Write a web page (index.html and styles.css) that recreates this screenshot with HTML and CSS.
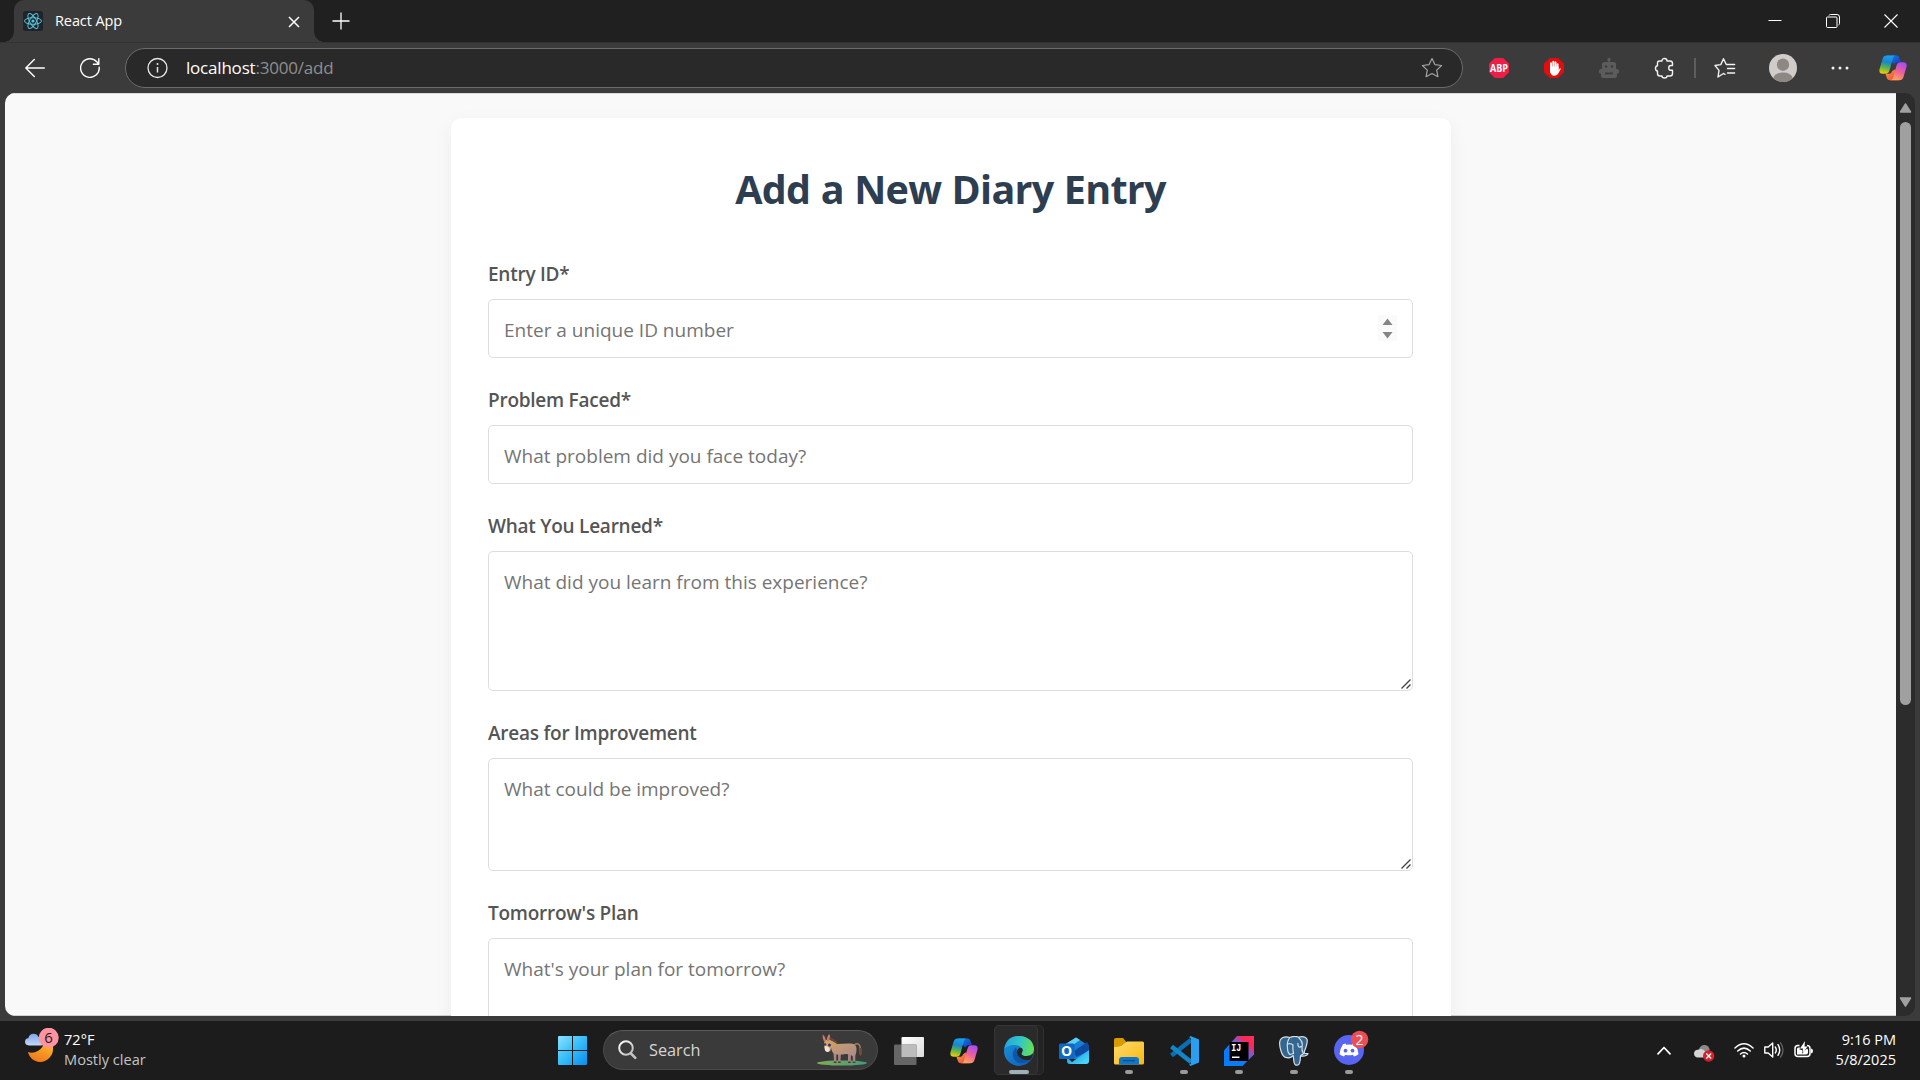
FILE: index.html
```
<!DOCTYPE html>
<html lang="en">
<head>
<meta charset="utf-8">
<title>React App</title>
<link rel="stylesheet" href="styles.css">
</head>
<body>
<svg class="defs" width="0" height="0" aria-hidden="true">
  <defs>
    <linearGradient id="cpLeft" x1="0.4" y1="0" x2="0.2" y2="1"><stop offset="0" stop-color="#1a9df0"/><stop offset="0.35" stop-color="#1b86c9"/><stop offset="0.65" stop-color="#5fb54a"/><stop offset="1" stop-color="#fccb00"/></linearGradient>
    <linearGradient id="cpTop" x1="0" y1="0" x2="1" y2="1"><stop offset="0" stop-color="#0b87e4"/><stop offset="1" stop-color="#1a35c0"/></linearGradient>
    <linearGradient id="cpRight" x1="0.7" y1="0" x2="0.3" y2="1"><stop offset="0" stop-color="#a64df5"/><stop offset="0.5" stop-color="#ee5f9b"/><stop offset="1" stop-color="#ffa956"/></linearGradient>
    <linearGradient id="cpBottom" x1="0" y1="0" x2="1" y2="1"><stop offset="0" stop-color="#f9a13a"/><stop offset="1" stop-color="#ed3a45"/></linearGradient>
    <symbol id="copilot" viewBox="0 0 28 28">
      <path fill="url(#cpTop)" d="M8 1.500h9.500c1.800 0 2.500 1 3 2.500L22 8.200h-3.200c-2 0-3 .8-3.600 2.600L13 8z"/>
      <path fill="url(#cpBottom)" d="M20 26.300h-9.200c-1.800 0-2.600-1.200-3.100-2.800L6.500 19.800h3c2 0 3-.8 3.500-2.600l3-2z"/>
      <path fill="url(#cpLeft)" d="M7.800 1.500H17c-1.700 0-2.700 1.200-3.200 3L10.600 16c-.8 2.800-1.900 3.800-4.300 3.800H4C.8 19.800-.2 17.900.6 15L3.500 5C4.300 2.600 5.400 1.500 7.800 1.500z"/>
      <path fill="url(#cpRight)" d="M20.200 26.300H11c1.700 0 2.700-1.200 3.200-3L17.400 12c.8-2.800 1.900-3.800 4.300-3.800H24c3.200 0 4.200 1.900 3.400 4.800l-2.900 10c-.8 2.300-1.900 3.300-4.300 3.300z"/>
    </symbol>
    <linearGradient id="win" x1="0" y1="0" x2="1" y2="1"><stop offset="0" stop-color="#8be3ff"/><stop offset="0.5" stop-color="#35bdf8"/><stop offset="1" stop-color="#0a8cf0"/></linearGradient>
    <linearGradient id="moon" x1="1" y1="0" x2="0.5" y2="1"><stop offset="0" stop-color="#ffc02e"/><stop offset="1" stop-color="#f07a1c"/></linearGradient>
    <linearGradient id="cloud" x1="0" y1="0" x2="0" y2="1"><stop offset="0" stop-color="#7ea6e8"/><stop offset="1" stop-color="#c4d8fa"/></linearGradient>
    <linearGradient id="edgeTop" x1="0" y1="0.3" x2="1" y2="0.5"><stop offset="0" stop-color="#23a5e0"/><stop offset="0.5" stop-color="#31c6c6"/><stop offset="1" stop-color="#65e052"/></linearGradient>
    <linearGradient id="edgeLow" x1="0" y1="0" x2="1" y2="1"><stop offset="0" stop-color="#1b96e3"/><stop offset="1" stop-color="#0f58ab"/></linearGradient>
    <linearGradient id="folder" x1="0" y1="0" x2="1" y2="1"><stop offset="0" stop-color="#ffdb70"/><stop offset="1" stop-color="#f9b90e"/></linearGradient>
    <linearGradient id="mailBody" x1="0" y1="0" x2="1" y2="1"><stop offset="0" stop-color="#1689d8"/><stop offset="1" stop-color="#4fe3ff"/></linearGradient>
    <linearGradient id="idea" x1="0.1" y1="1" x2="1" y2="0"><stop offset="0.3" stop-color="#087cfa"/><stop offset="0.62" stop-color="#8a55c8"/><stop offset="0.78" stop-color="#fe2857"/><stop offset="1" stop-color="#fe315d"/></linearGradient>
    <linearGradient id="viewFront" x1="0" y1="0" x2="1" y2="1"><stop offset="0" stop-color="#ffffff"/><stop offset="1" stop-color="#dcdcdc"/></linearGradient>
    <linearGradient id="lens" x1="0" y1="0" x2="1" y2="1"><stop offset="0" stop-color="#ffffff"/><stop offset="1" stop-color="#b8b8b8"/></linearGradient>
    <linearGradient id="grass" x1="0" y1="0" x2="1" y2="0"><stop offset="0" stop-color="#7fae55"/><stop offset="1" stop-color="#459a7a"/></linearGradient>
    <linearGradient id="hide" x1="0" y1="0" x2="1" y2="1"><stop offset="0" stop-color="#d5a660"/><stop offset="1" stop-color="#a98a8c"/></linearGradient>
  </defs>
</svg>

<header class="titlebar">
  <div class="tab">
    <svg class="favicon" width="20" height="20" viewBox="0 0 20 20" fill="none" stroke="#58c4dc"><rect width="20" height="20" rx="2.500" fill="#20232a" stroke="none"/><ellipse cx="10" cy="10" rx="8.500" ry="3.300"/><ellipse cx="10" cy="10" rx="8.500" ry="3.300" transform="rotate(60 10 10)"/><ellipse cx="10" cy="10" rx="8.500" ry="3.300" transform="rotate(120 10 10)"/><circle cx="10" cy="10" r="1.600" fill="#58c4dc" stroke="none"/></svg>
    <span class="tab-title">React App</span>
    <svg class="tab-close" width="12" height="12" viewBox="0 0 12 12" stroke="#fff" stroke-width="1.500"><path d="M1 1l10 10M11 1L1 11"/></svg>
  </div>
  <svg class="new-tab" width="18" height="18" viewBox="0 0 18 18" stroke="#fff" stroke-width="1.300"><path d="M9 .5v17M.5 9h17"/></svg>
  <div class="caption">
    <svg width="14" height="14" viewBox="0 0 14 14" stroke="#fff"><path d="M.5 6.500h13"/></svg>
    <svg width="14" height="14" viewBox="0 0 14 14" fill="none" stroke="#fff"><rect x=".5" y="3" width="10.500" height="10.500" rx="1"/><path d="M3 1.500Q3.300.5 4.500.5H11q2.500 0 2.500 2.500v6.500q0 1.200-1 1.500"/></svg>
    <svg width="14" height="14" viewBox="0 0 14 14" stroke="#fff" stroke-width="1.100"><path d="M.5.500l13 13M13.500.5l-13 13"/></svg>
  </div>
</header>

<nav class="toolbar">
  <svg class="back" width="20" height="20" viewBox="0 0 20 20" fill="none" stroke="#fff" stroke-width="1.400" stroke-linecap="round" stroke-linejoin="round"><path d="M19.300 10H1M9.300 1.500L.8 10l8.500 8.500"/></svg>
  <svg class="reload" width="20" height="20" viewBox="0 0 20 20" fill="none" stroke="#fff" stroke-width="1.400" stroke-linecap="round" stroke-linejoin="round"><path d="M19.200 9.200A9.300 9.300 0 1 1 17 4l1.700 2M18.800.8v5.400h-5.400"/></svg>
  <div class="omnibox">
    <svg width="22" height="22" viewBox="0 0 22 22" fill="none" stroke="#e8e8e8" stroke-width="1.300"><circle cx="11.500" cy="11" r="9.500"/><path d="M11.500 10v5.500" stroke-width="1.500"/><circle cx="11.500" cy="7" r="1" fill="#e8e8e8" stroke="none"/></svg>
    <span class="url"><span class="host">localhost</span>:3000/add</span>
    <svg class="star" width="22" height="22" viewBox="0 0 22 22" fill="none" stroke="#a3a3a3" stroke-width="1.200" stroke-linejoin="round"><path d="M11 1.500l2.900 6.100 6.700.9-4.900 4.600 1.200 6.600L11 16.500l-5.900 3.200 1.200-6.600L1.400 8.500l6.700-.9z"/></svg>
  </div>
  <div class="extensions">
    <svg width="22" height="22" viewBox="0 0 22 22"><path fill="#ed1e45" d="M6.800 1h8.400L21 6.800v8.400L15.200 21H6.800L1 15.200V6.800z"/><text class="abp" x="11" y="14.700" text-anchor="middle" textLength="18" lengthAdjust="spacingAndGlyphs">ABP</text></svg>
    <svg width="22" height="22" viewBox="0 0 22 22"><path fill="#e40d0d" d="M6.800 1h8.400L21 6.800v8.400L15.200 21H6.800L1 15.200V6.800z"/><path fill="none" stroke="#fff" stroke-width="1.900" stroke-linecap="round" d="M8 12V6.300M10.300 10V4.700M12.500 10V5.200M14.600 12V7.200"/><path fill="#fff" d="M7 9.500h8.500V13l1.200-1.400q1-.6 1 .3L15 17q-1.200 1.700-4 1.700T7 15z"/></svg>
    <svg width="22" height="22" viewBox="0 0 22 22" fill="#5c5c5c"><circle cx="11" cy="2.500" r="1.700"/><path d="M10.300 3h1.400v3h-1.400zM6.500 5h9Q18 5 18 7.500V12H4V7.500Q4 5 6.500 5zM3 12h16q2 0 2 2v1q0 1.500-1.500 1.500H19V19q0 2-2 2H5q-2 0-2-2v-2.500h-.5Q1 16.500 1 15v-1q0-2 2-2z"/><g fill="#3b3b3b"><circle cx="8" cy="9.500" r="1.200"/><circle cx="14" cy="9.500" r="1.200"/><path d="M7 15.500h8v1.800H7z"/></g></svg>
    <svg class="puzzle" width="22" height="22" viewBox="0 0 22 22" fill="none" stroke="#f2f2f2" stroke-width="1.400" stroke-linejoin="round"><path d="M5.500 4H8q0-2.500 2.500-2.500T13 4h3q2.500 0 2.500 2.500v2H17q-2.300 0-2.300 2.400T17 13.300h1.500v3.200Q18.500 19 16 19h-3q0 2-2.500 2T8 19H6q-2.500 0-2.500-2.500V14q-2-.3-2-2.600t2-2.600V6q0-2 2-2z"/></svg>
    <i class="divider"></i>
    <svg class="favs" width="22" height="22" viewBox="0 0 22 22" fill="none" stroke="#f2f2f2" stroke-width="1.400" stroke-linecap="round" stroke-linejoin="round"><path d="M9.500 16.500L4 20l1-6.600L1 8.500l5.800-.9L9.500 1.700l2.800 5.800h8.300M9.500 16.500l1.500.8M13.500 11.500h7.100M13.500 16h7.100"/></svg>
    <svg class="avatar" width="28" height="28" viewBox="0 0 28 28"><circle cx="14" cy="14" r="14" fill="#cfccca"/><circle cx="14" cy="10.700" r="6.200" fill="#8e8885"/><path fill="#8e8885" d="M4.300 24Q6 18.500 14 18.500T23.700 24Q20 28 14 28T4.300 24z"/></svg>
    <svg class="dots" width="18" height="18" viewBox="0 0 18 18" fill="#f2f2f2"><circle cx="2" cy="9" r="1.500"/><circle cx="9" cy="9" r="1.500"/><circle cx="16" cy="9" r="1.500"/></svg>
    <svg class="cp" width="28" height="28"><use href="#copilot"/></svg>
  </div>
</nav>

<main class="frame">
  <div class="viewport">
    <form class="card">
      <h1 class="heading">Add a New Diary Entry</h1>
      <div class="group">
        <label class="label" for="eid">Entry ID*</label>
        <div class="field number">
          <input class="control" id="eid" type="text" inputmode="numeric" placeholder="Enter a unique ID number">
          <svg class="spinner" width="19" height="26" viewBox="0 0 19 26"><rect width="19" height="26" fill="#fafafa"/><path fill="#858585" d="M9.500 3.500l5 6.500h-10zM4.500 17h10l-5 6.500z"/></svg>
        </div>
      </div>
      <div class="group">
        <label class="label" for="problem">Problem Faced*</label>
        <div class="field"><input class="control" id="problem" type="text" placeholder="What problem did you face today?"></div>
      </div>
      <div class="group">
        <label class="label" for="learned">What You Learned*</label>
        <div class="field tall"><textarea class="control" id="learned" placeholder="What did you learn from this experience?"></textarea>
          <svg class="grip" width="10" height="10" viewBox="0 0 10 10" stroke="#444" stroke-width="1.400"><path d="M.5 9.500l9-9M5.500 9.500l4-4"/></svg></div>
      </div>
      <div class="group">
        <label class="label" for="areas">Areas for Improvement</label>
        <div class="field mid"><textarea class="control" id="areas" placeholder="What could be improved?"></textarea>
          <svg class="grip" width="10" height="10" viewBox="0 0 10 10" stroke="#444" stroke-width="1.400"><path d="M.5 9.500l9-9M5.500 9.500l4-4"/></svg></div>
      </div>
      <div class="group">
        <label class="label" for="plan">Tomorrow's Plan</label>
        <div class="field mid"><textarea class="control" id="plan" placeholder="What's your plan for tomorrow?"></textarea></div>
      </div>
    </form>
  </div>
  <div class="scrollbar">
    <svg width="13" height="10" viewBox="0 0 13 10"><path fill="#a0a0a0" stroke="#a0a0a0" stroke-width="1.500" stroke-linejoin="round" d="M6.500 1l5 8h-10z"/></svg>
    <div class="thumb"></div>
    <svg class="down" width="13" height="10" viewBox="0 0 13 10"><path fill="#a0a0a0" stroke="#a0a0a0" stroke-width="1.500" stroke-linejoin="round" d="M1.500 1h10l-5 8z"/></svg>
  </div>
</main>

<footer class="taskbar">
  <div class="weather">
    <svg width="36" height="36" viewBox="0 0 36 36"><path fill="url(#moon)" d="M27.500 15.500q2 9-2.800 14-5 5.500-12 4.200Q5.500 32.300 2.800 24q5.200 2 10.500-1.200 5.400-3.500 5.700-9z"/><path fill="url(#cloud)" d="M4 17.500q-4-.3-4-3.700 0-3.200 3.300-3.600Q4.300 5.700 8.500 5.700q3.700 0 4.900 3.300 6.300 0 6.300 4.300 0 4.200-4.500 4.200z"/><circle cx="23.700" cy="9.700" r="10" fill="#ff93a0"/><text class="badge-dark" x="23.600" y="15" text-anchor="middle">6</text></svg>
    <div class="weather-text"><span class="temp">72°F</span><span class="sky">Mostly clear</span></div>
  </div>
  <div class="slot"><svg width="29" height="29" viewBox="0 0 29 29"><path fill="url(#win)" d="M1 0h13v14H0V1q0-1 1-1zM15 0h13q1 0 1 1v13H15zM0 15h14v14H1q-1 0-1-1zM15 15h14v13q0 1-1 1H15z"/></svg></div>
  <div class="search">
    <svg width="19" height="20" viewBox="0 0 19 20" fill="none" stroke="url(#lens)" stroke-width="2"><circle cx="8" cy="8" r="6.800"/><path stroke="#c4c4c4" stroke-width="2.500" stroke-linecap="round" d="M13 13.500l4.300 4.300"/></svg>
    <span class="search-text">Search</span>
    <svg class="donkey" width="50" height="32" viewBox="0 0 50 32"><ellipse cx="25" cy="29" rx="25" ry="2.600" fill="url(#grass)"/><path fill="none" stroke="#a87f5c" stroke-width="1.500" d="M37 11q6-4 6.500 5"/><path fill="#7a4e35" d="M42.300 14h2.200l.4 6-1.500 2-1.500-3z"/><path fill="#a88484" d="M16.500 19h3l-.3 9H17zM21 19h3l-.6 9h-2.200zM31 19h3l-.3 9H31zM35.500 18h3l-.3 10H36z"/><path fill="url(#hide)" d="M7.300 7.500Q9 5 12 5.500q5 1 8 4.500 8-.7 14-.5 5.500.4 5.500 5.500 0 6-3 7.500-4-3-8-2.500-5 1-11 0-2.700-1.500-3.300-6l-1 3q-3 1.500-5.400-1Q6.500 12 7.300 7.500z"/><path fill="#c67b69" d="M5.700.5Q9 3 8.700 7L6.900 7Q5 4 5.700.5zM12.300 0q2 3.500-.3 7h-2Q9.400 3 12.300 0z"/><path fill="#694632" d="M12.500 3.500Q19 5 22 10q-4-1-9.500-4.500z"/><path fill="#eee3df" d="M8 12q3-.5 4.700 2.500.3 3.500-2.400 3.600Q7 17.500 8 12z"/><circle cx="8" cy="10.500" r="1.200" fill="#31366e"/><circle cx="12.500" cy="11" r="1.500" fill="#31366e"/><path fill="#503b3a" d="M16.800 27.500h2.700V29h-2.700zM21 27.500h2.700V29H21zM31 27.500h2.700V29H31zM35.700 27.500h2.700V29h-2.700z"/></svg>
  </div>
  <div class="slot"><svg width="30" height="28" viewBox="0 0 30 28"><rect x="7.500" width="22.500" height="20" rx="1" fill="url(#viewFront)"/><rect y="7.500" width="22.500" height="20.500" rx="1" fill="#666"/><rect x="7.500" y="7.500" width="15" height="12.500" fill="#bdbdbd"/></svg></div>
  <div class="slot"><svg width="28" height="28"><use href="#copilot"/></svg></div>
  <div class="slot active"><div class="tile tile-back"></div><div class="tile"></div>
    <svg class="over" width="30" height="30" viewBox="0 0 30 30"><circle cx="15" cy="15" r="15" fill="url(#edgeLow)"/><path fill="url(#edgeTop)" d="M.4 12.500Q2.500 0 15 0q13.700.8 15 12.500.3 7-7.200 7.500-5.300 0-5.300-2.600 2-1.900.3-4.900-2-3.200-6.800-3.500Q4.500 8.700.4 12.500z"/><path fill="#0c4c9c" opacity=".75" d="M11.500 11.500q-4.500 5.500-1.700 11Q12.500 27.500 19 27q4.500-.5 7.500-3.500-5.500 1.500-9.500-1-4.500-3-3.500-8z"/><path fill="#252525" d="M17.500 17.400q0 2.600 5.300 2.600 3.400 0 6-2l.2.800q-.7 2.600-2.300 4.600-5 1.700-9.700-.9-4.700-3.200-3.800-7.700.9-3 3.600-3 2.800.8 1.500 4z"/></svg>
    <i class="mark wide"></i></div>
  <div class="slot"><svg width="30" height="28" viewBox="0 0 30 28"><path fill="#1681d3" d="M5 8L17 .5 30 9v13H5z"/><path fill="#5fd0f5" d="M5 8L17 .5l4 2.500L8 12z"/><path fill="#0f4aa0" d="M15 14L28 5l2 3.500V14l-13 6z"/><path fill="url(#mailBody)" d="M13 25l17-12v11q0 3-3 3H11q-3 0-3-3v-4z"/><rect y="6.500" width="15.500" height="15.500" rx="1.500" fill="#0c69c5"/><text class="outlook" x="7.700" y="19" text-anchor="middle">O</text></svg></div>
  <div class="slot"><svg width="30" height="28" viewBox="0 0 30 28"><path fill="#d99b00" d="M0 3q0-2 2-2h7l3 3.500v6H0z"/><path fill="url(#folder)" d="M0 10q5 0 7.500-1.200L13 4.500h15.500Q30 4.500 30 6v20q0 1.500-1.500 1.500h-27Q0 27.500 0 26z"/><path fill="#1176c8" d="M5 27.500V23q0-3 3-3h14q3 0 3 3v4.500z"/><path fill="#0b4f90" d="M9 23h12v1.300H9z"/></svg><i class="mark"></i></div>
  <div class="slot"><svg width="30" height="30" viewBox="0 0 30 30"><path fill="none" stroke="#0b6fb5" stroke-width="4.600" stroke-linejoin="round" d="M22 4L2.500 19.500"/><path fill="none" stroke="#1585c9" stroke-width="4.600" stroke-linejoin="round" d="M2.500 10.500L22 26"/><path fill="#2a9ff0" d="M21.500 0L30 3.500v23L21.500 30 20 28.500q2 0 2-2v-23q0-2-2-2z"/></svg><i class="mark"></i></div>
  <div class="slot"><svg width="30" height="30" viewBox="0 0 30 30"><path fill="url(#idea)" d="M13 0h17v18.500L18.500 30H0V14.500z"/><rect x="5.500" y="6" width="19" height="19"/><text class="ij" x="7.200" y="15" textLength="10" lengthAdjust="spacingAndGlyphs">IJ</text><path fill="#fff" d="M8 20.500h7.500V22H8z"/></svg><i class="mark"></i></div>
  <div class="slot"><svg width="30" height="30" viewBox="0 0 30 30" fill="#336791" stroke="#d9e0e5" stroke-width="1.200" stroke-linejoin="round"><path d="M8 21.500Q4 22 2 15-.5 7 1.500 3.500 4.500-.5 11 1.500q5-2 8.500-.3Q26-.5 28 3.300 29 6.500 25.500 15q-.5 2.500.5 2.500l3 .2q-1.500 3-7.500 2.300-.3 8.500-2.500 9-3.500.8-4-3l-.8-6.500Q10.500 23 8 21.500z"/><path fill="none" d="M10.500 2Q7.500 6 8.500 12q0 5 2.500 6.500l3.500-1Q13.500 12 14 9q-2-2-5.500-1M19.500 1.500q5 4.500 3.500 9.500-.5 4 1.500 6.500l-3 2.500M19 7q-.5 2 .5 3.500t3-.5"/></svg><i class="mark"></i></div>
  <div class="slot"><svg class="discord" width="35" height="36" viewBox="0 0 35 36"><circle cx="15" cy="20" r="15" fill="#5865f2"/><path fill="#fff" d="M9 14.200l2.500-.7.7 1.200q2.800-.5 5.600 0l.7-1.200 2.500.7q3.300 4.800 3.500 10-1.700 1.500-4.500 2.300l-1.200-1.800q-3.800 1-7.600 0L10 26.500q-2.800-.8-4.500-2.300.2-5.200 3.500-10z"/><circle cx="11.500" cy="20.700" r="1.900" fill="#5865f2"/><circle cx="18.500" cy="20.700" r="1.900" fill="#5865f2"/><circle cx="25.600" cy="9.500" r="8.700" fill="#ec4e56"/><text class="badge-light" x="25.600" y="14.700" text-anchor="middle">2</text></svg><i class="mark"></i></div>
  <div class="tray">
    <svg class="chev" width="14" height="9" viewBox="0 0 14 9" fill="none" stroke="#fff" stroke-width="1.700" stroke-linecap="round" stroke-linejoin="round"><path d="M1 7.800l6-6.300 6 6.300"/></svg>
    <svg class="drive" width="21" height="20" viewBox="0 0 21 20"><path fill="#8a8a8a" d="M5 7Q7 2.500 11 3q4 .5 4.700 5l-5 5z"/><path fill="#d4d4d4" d="M4 15.500q-4-.3-4-4Q.2 8 4 7.700q3-1.500 5.500.3L14 12v3.500z"/><circle cx="14.700" cy="14" r="5.700" fill="#d8202a"/><path stroke="#fff" stroke-width="1.400" d="M12.300 11.600l4.800 4.800M17.100 11.600l-4.800 4.800"/></svg>
    <svg class="wifi" width="20" height="16" viewBox="0 0 20 16" fill="none" stroke="#fff" stroke-width="1.500" stroke-linecap="round"><path d="M1 6q9-8.500 18 0M3.700 9q6.300-5.800 12.600 0M6.500 12q3.500-3 7 0"/><circle cx="10" cy="14" r="1.500" fill="#fff" stroke="none"/></svg>
    <svg class="sound" width="20" height="18" viewBox="0 0 20 18" fill="none" stroke="#fff" stroke-width="1.400" stroke-linecap="round" stroke-linejoin="round"><path d="M.8 6v6h3.400l4.500 4V2L4.200 6zM11.300 6q2 3 0 6M14 3.700q3.500 5.300 0 10.600"/><path stroke="#5d5d5d" d="M16.500 1.800q5 7.200 0 14.400"/></svg>
    <svg class="battery" width="20" height="18" viewBox="0 0 20 18"><path fill="none" stroke="#fff" stroke-width="1.500" d="M5.500 4.500H4Q1 4.500 1 7.500v5q0 3 3 3h9q3 0 3-3v-5q0-3-3-3"/><path fill="#fff" d="M17 7.500q2 .3 2 2.500t-2 2.500zM3 13.500V8q0-1.500 1.500-1.500H6l-.5 2L8 9v4.500zM8 13.500V12l5-4.500q1 .3 1 2v2q0 2-2 2zM11 0L6 7.500h3L8 13l5.500-7.500h-3z"/></svg>
    <div class="clock"><span>9:16 PM</span><span>5/8/2025</span></div>
  </div>
</footer>
</body>
</html>
```
FILE: styles.css
```
* { box-sizing: border-box; }
body {
  margin: 0;
  width: 1920px;
  height: 1080px;
  overflow: hidden;
  display: flex;
  flex-direction: column;
  background: #3b3b3b;
  font-family: "Open Sans", "Noto Sans", sans-serif;
}
svg { display: block; flex: none; }
.defs { position: absolute; }

/* Title bar */
.titlebar {
  height: 42px;
  flex: none;
  display: flex;
  align-items: center;
  background: #202020;
  padding-left: 14px;
}
.tab {
  position: relative;
  width: 300px;
  height: 42px;
  display: flex;
  align-items: center;
  padding: 0 14px 0 9px;
  background: #3b3b3b;
  border-radius: 10px 10px 0 0;
}
.tab::before, .tab::after {
  content: "";
  position: absolute;
  bottom: 0;
  width: 10px;
  height: 10px;
}
.tab::before { left: -10px; background: radial-gradient(circle at 0 0, #202020 9.500px, #3b3b3b 10px); }
.tab::after { right: -10px; background: radial-gradient(circle at 100% 0, #202020 9.500px, #3b3b3b 10px); }
.tab-title { margin-left: 12px; flex: 1; font-size: 14.500px; letter-spacing: -0.1px; line-height: 20px; color: #fff; }
.tab-close { margin-top: 2px; }
.new-tab { margin-left: 18px; }
.caption { margin-left: auto; display: flex; }
.caption svg { margin: 0 22px; }

/* Toolbar */
.toolbar {
  height: 51px;
  flex: none;
  display: flex;
  align-items: center;
  border-top: 1px solid #333;
  padding-left: 25px;
}
.reload { margin-left: 35px; }
.omnibox {
  width: 1338px;
  height: 40px;
  margin-left: 25px;
  display: flex;
  align-items: center;
  padding: 0 19px 0 20px;
  border: 1px solid #6b6b6b;
  border-radius: 20px;
  background: #292929;
}
.url { flex: 1; margin-left: 18px; font-size: 17px; line-height: 24px; letter-spacing: -0.2px; color: #8f8f8f; margin-top: -1px; }
.host { color: #fff; }
.extensions { flex: 1; display: flex; align-items: center; padding-left: 25px; }
.extensions svg + svg { margin-left: 33px; }
.abp { font: 700 10px "Open Sans", sans-serif; fill: #fff; }
.extensions svg.puzzle { margin-left: 34px; }
.divider { width: 2px; height: 20px; margin: 0 18px 0 18px; background: #5d5d5d; }
.extensions svg.avatar { margin-left: 33px; }
.extensions svg.dots { margin-left: 34px; }
.extensions svg.cp { margin-left: 30px; }

/* Web page */
.frame { height: 923px; flex: none; display: flex; margin: 0 5px; border-radius: 10px; overflow: hidden; }
.viewport {
  width: 1891px;
  overflow: hidden;
  padding: 25px 445px 0 446px;
  background: #f9f9f9;
  box-shadow: inset 0 1px 0 #dcdcdc, inset 0 -1px 0 #cfcfcf;
}
.card {
  display: flex;
  flex-direction: column;
  gap: 27px;
  height: 1200px;
  padding: 41px 38px 0 37px;
  border-radius: 10px;
  background: #fff;
  box-shadow: 0 5px 19px rgba(0, 0, 0, 0.05);
}
.heading {
  margin: 0 0 13px;
  height: 60px;
  line-height: 60px;
  text-align: center;
  font-size: 39.500px;
  font-weight: 700;
  letter-spacing: -0.75px;
  word-spacing: 0.9px;
  color: #2c3e50;
}
.group { display: flex; flex-direction: column; gap: 10px; }
.label { line-height: 30px; font-size: 19px; font-weight: 600; letter-spacing: -0.25px; color: #555; }
.field {
  position: relative;
  display: flex;
  height: 59px;
  border: 1px solid #ddd;
  border-radius: 5px;
  background: #fff;
}
.field.tall { height: 140px; }
.field.mid { height: 113px; }
.control {
  flex: 1;
  border: 0;
  outline: 0;
  margin: 0;
  padding: 17px 15px 13px;
  background: transparent;
  resize: none;
  font: 19px/27px "Open Sans", "Noto Sans", sans-serif;
  color: #333;
}
.control::placeholder { color: #757575; }
.spinner { margin: 15px 15px 0 0; }
.grip { position: absolute; right: 1px; bottom: 1px; }

/* Scrollbar */
.scrollbar {
  width: 19px;
  display: flex;
  flex-direction: column;
  align-items: center;
  padding: 10px 0 9px;
  background: #2c2c2c;
}
.thumb { width: 11px; height: 583px; margin-top: 9px; border-radius: 6px; background: #a0a0a0; }
.down { margin-top: auto; }

/* Taskbar */
.taskbar {
  height: 59px;
  flex: none;
  margin-top: 5px;
  display: flex;
  align-items: center;
  background: #1c1c1c;
}
.weather { width: 545px; height: 59px; padding: 7px 0 0 25px; display: flex; }
.weather-text { display: flex; flex-direction: column; margin: 1px 0 0 3px; font-size: 14.600px; line-height: 20px; }
.temp { color: #fff; }
.sky { color: #c4c4c4; }
.badge-dark { font: 15px "Open Sans", sans-serif; fill: #1c1c1c; }
.badge-light { font: 14px "Open Sans", sans-serif; fill: #fff; }
.slot { position: relative; width: 55px; height: 59px; flex: none; display: flex; align-items: center; justify-content: center; }
.search {
  width: 275px;
  height: 40px;
  margin: -1px 3.500px 0 3px;
  display: flex;
  align-items: center;
  padding: 0 10px 0 14px;
  border: 1px solid #4a4a4a;
  border-top-color: #5c5c5c;
  border-radius: 20px;
  background: #3a3a3a;
}
.search-text { flex: 1; margin-left: 12px; font-size: 16.300px; line-height: 24px; color: #d6d6d6; }
.tile { position: absolute; left: 2px; top: 4px; width: 44px; height: 50px; border-radius: 5px; background: #2a2a2a; border: 1px solid #363636; }
.tile-back { width: 50px; background: #232323; border-color: #303030; }
.over { position: relative; }
.mark { position: absolute; bottom: 6px; left: 50%; width: 8px; height: 4px; margin-left: -4px; border-radius: 2px; background: #9a9a9a; }
.mark.wide { width: 20px; margin-left: -10px; background: #9fb0b6; }
.outlook { font: 700 14px "Open Sans", sans-serif; fill: #fff; }
.ij { font: 700 11px "Liberation Mono", monospace; fill: #fff; }
.discord { margin: -5px 0 0 5px; }
.tray { margin-left: auto; padding-right: 24px; display: flex; align-items: center; }
.drive { margin-left: 23px; margin-top: 2px; }
.wifi { margin-left: 19px; margin-top: -2px; }
.sound { margin-left: 10px; margin-top: -1px; }
.battery { margin-left: 10px; margin-top: -2px; }
.clock { width: 82px; display: flex; flex-direction: column; text-align: right; font-size: 14.500px; line-height: 20px; margin-top: -1px; color: #fff; }
```
